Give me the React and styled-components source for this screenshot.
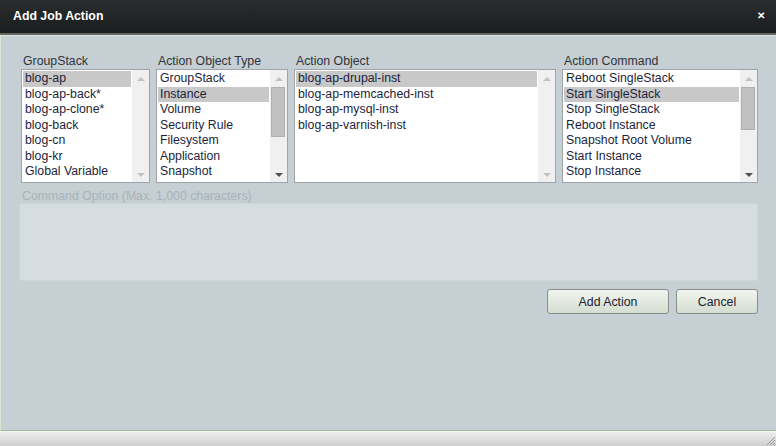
import styled, { createGlobalStyle } from "styled-components";

const GlobalStyle = createGlobalStyle`
  html, body {
    margin: 0;
    padding: 0;
    background: #c5cfd4;
    font-family: "Liberation Sans", Arial, sans-serif;
  }
`;

const Dialog = styled.div`
  width: 776px;
  height: 446px;
  display: flex;
  flex-direction: column;
  background: #c5cfd4;
  overflow: hidden;
`;

const TitleBar = styled.div`
  height: 35px;
  flex: none;
  display: flex;
  align-items: center;
  justify-content: space-between;
  padding: 0 11px 1px 13px;
  background: linear-gradient(#2a2d2f, #1b1d1e);
  border-bottom: 2px solid #62665f;
  box-sizing: border-box;
  color: #fff;
  font-size: 12.3px;
  font-weight: bold;
`;

const Close = styled.span`
  font-size: 10px;
  font-weight: bold;
  line-height: 1;
`;

const Body = styled.div`
  flex: 1;
  display: flex;
  flex-direction: column;
  padding: 18px 18px 0 20px;
  border-left: 1px solid #dbe6d2;
  border-top: 1px solid #dfe6e6;
  border-bottom: 1px solid #a8b8a0;
`;

const ListRow = styled.div`
  display: flex;
  gap: 6px;
`;

const Field = styled.div`
  width: ${(p) => p.$w}px;
  flex: none;
  display: flex;
  flex-direction: column;
`;

const Label = styled.div`
  font-size: 12.3px;
  color: ${(p) => (p.$muted ? "#a9b3b8" : "#30343a")};
  height: 15px;
  line-height: 15px;
  padding-left: ${(p) => (p.$muted ? 1 : 2)}px;
`;

const ListBox = styled.div`
  height: 114px;
  box-sizing: border-box;
  border: 1px solid #9ea4a8;
  background: #fff;
  display: flex;
`;

const Items = styled.div`
  flex: 1;
  padding: 1px 1px 0 1px;
  overflow: hidden;
`;

const Item = styled.div`
  height: 15.5px;
  line-height: 15.5px;
  font-size: 12.3px;
  color: #1d1f3c;
  padding-left: 2px;
  white-space: nowrap;
  background: ${(p) => (p.$selected ? "#c8c8c8" : "transparent")};
`;

const Scrollbar = styled.div`
  width: 17px;
  flex: none;
  background: #f0f0f0;
  position: relative;
  display: flex;
  flex-direction: column;
  align-items: center;
  justify-content: space-between;
  padding: 7px 0 5px;
  box-sizing: border-box;
`;

const Arrow = styled.div`
  width: 0;
  height: 0;
  border-left: 4px solid transparent;
  border-right: 4px solid transparent;
  ${(p) =>
    p.$down
      ? `border-top: 4px solid ${p.$active ? "#505050" : "#c2c2c2"};`
      : `border-bottom: 4px solid ${p.$active ? "#505050" : "#c2c2c2"};`}
`;

const Thumb = styled.div`
  position: absolute;
  left: 1px;
  right: 2px;
  top: 17px;
  height: ${(p) => p.$h}px;
  background: #c1c1c1;
  border: 1px solid #b0b0b0;
  box-sizing: border-box;
`;

const OptionLabel = styled(Label)`
  margin-top: 6px;
  padding-left: 1px;
`;

const OptionArea = styled.div`
  height: 78px;
  margin: -1px 0 0 -2px;
  background: #d5dde0;
  border: 1px solid #ccd5d9;
  border-radius: 2px;
  box-sizing: border-box;
`;

const Buttons = styled.div`
  display: flex;
  justify-content: flex-end;
  gap: 7px;
  margin-top: 8px;
`;

const Button = styled.button`
  width: ${(p) => p.$w}px;
  height: 25px;
  border: 1px solid #878d88;
  border-radius: 3px;
  background: linear-gradient(#f2f5f0, #d3ddd1);
  font-family: "Liberation Sans", Arial, sans-serif;
  font-size: 12.3px;
  color: #202230;
  padding: 0;
`;

const Footer = styled.div`
  height: 14px;
  flex: none;
  background: linear-gradient(#ededed, #cfcfcf);
  border-top: 1px solid #f4f4f4;
  display: flex;
  justify-content: flex-end;
  align-items: flex-end;
`;

const lists = [
  {
    label: "GroupStack",
    w: 129,
    items: ["blog-ap", "blog-ap-back*", "blog-ap-clone*", "blog-back", "blog-cn", "blog-kr", "Global Variable"],
    sel: 0,
  },
  {
    label: "Action Object Type",
    w: 132,
    items: ["GroupStack", "Instance", "Volume", "Security Rule", "Filesystem", "Application", "Snapshot"],
    sel: 1,
    thumb: 50,
  },
  {
    label: "Action Object",
    w: 262,
    items: ["blog-ap-drupal-inst", "blog-ap-memcached-inst", "blog-ap-mysql-inst", "blog-ap-varnish-inst"],
    sel: 0,
  },
  {
    label: "Action Command",
    w: 196,
    items: [
      "Reboot SingleStack",
      "Start SingleStack",
      "Stop SingleStack",
      "Reboot Instance",
      "Snapshot Root Volume",
      "Start Instance",
      "Stop Instance",
    ],
    sel: 1,
    thumb: 43,
  },
];

const Grip = () => (
  <svg width="12" height="12" viewBox="0 0 12 12">
    <path d="M11 3 L3 11 M11 6 L6 11 M11 9 L9 11" stroke="#9a9a9a" strokeWidth="1" />
  </svg>
);

export default function App() {
  return (
    <>
      <GlobalStyle />
      <Dialog>
        <TitleBar>
          <span>Add Job Action</span>
          <Close>✕</Close>
        </TitleBar>
        <Body>
          <ListRow>
            {lists.map((l) => (
              <Field key={l.label} $w={l.w}>
                <Label>{l.label}</Label>
                <ListBox>
                  <Items>
                    {l.items.map((it, i) => (
                      <Item key={it} $selected={i === l.sel}>
                        {it}
                      </Item>
                    ))}
                  </Items>
                  <Scrollbar>
                    <Arrow />
                    {l.thumb && <Thumb $h={l.thumb} />}
                    <Arrow $down $active={!!l.thumb} />
                  </Scrollbar>
                </ListBox>
              </Field>
            ))}
          </ListRow>
          <OptionLabel $muted>Command Option (Max. 1,000 characters)</OptionLabel>
          <OptionArea />
          <Buttons>
            <Button $w={122}>Add Action</Button>
            <Button $w={82}>Cancel</Button>
          </Buttons>
        </Body>
        <Footer>
          <Grip />
        </Footer>
      </Dialog>
    </>
  );
}
